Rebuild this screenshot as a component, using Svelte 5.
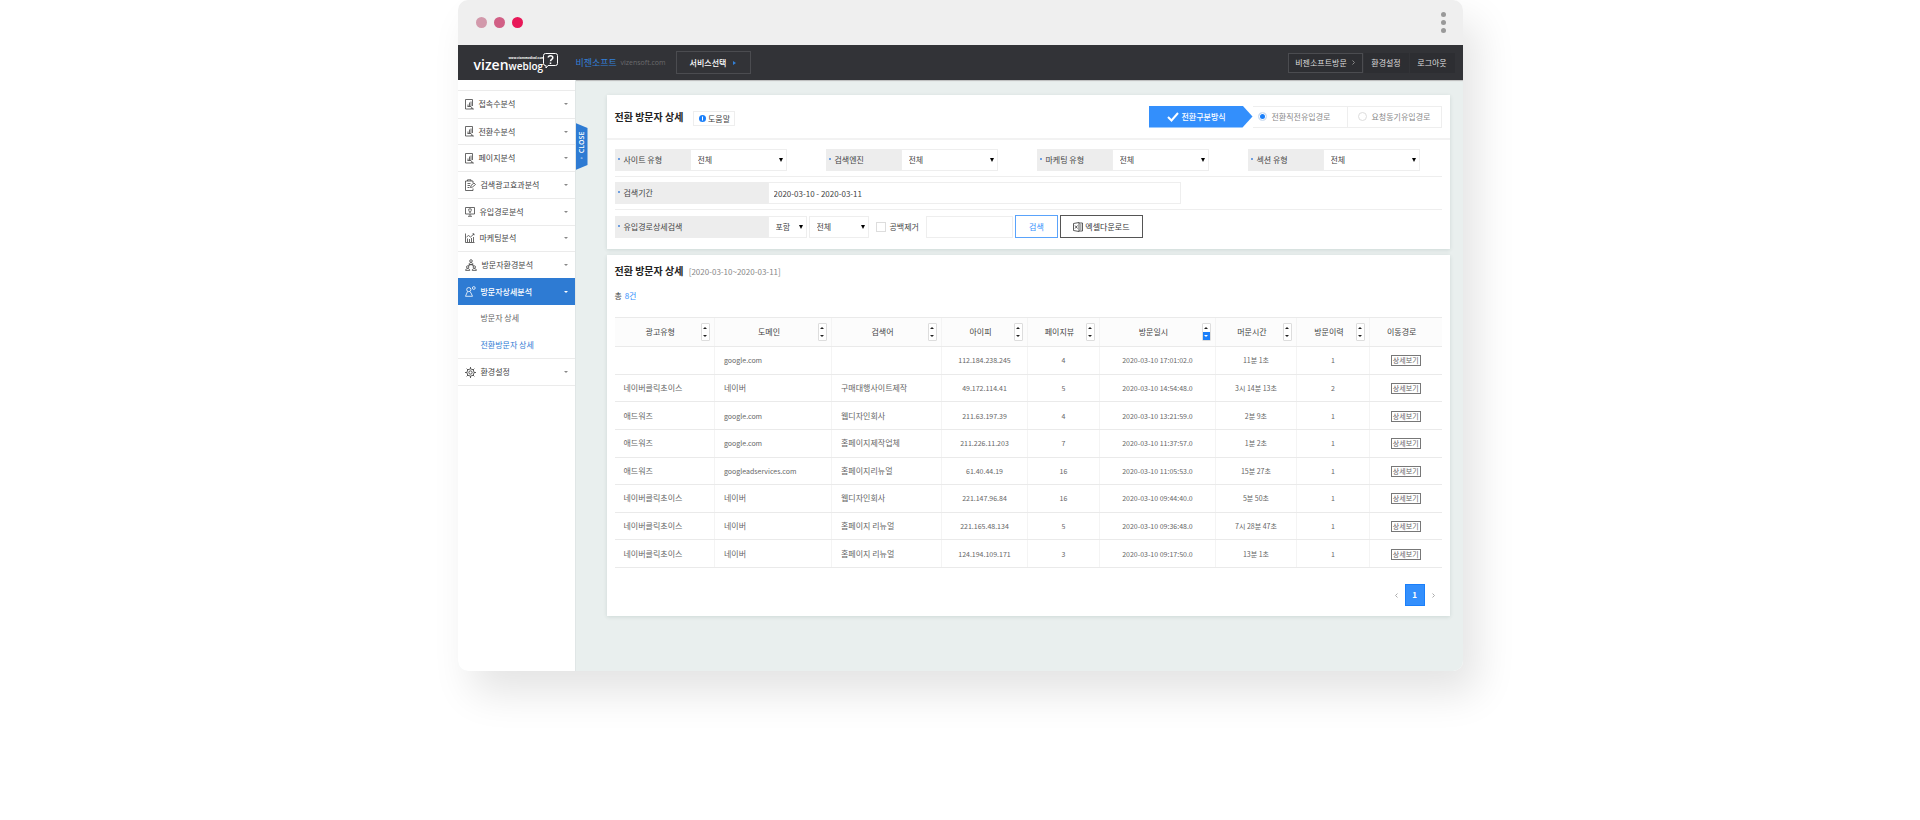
<script lang="ts">
  type Row = {
    ad: string;
    domain: string;
    keyword: string;
    ip: string;
    views: number;
    date: string;
    stay: string;
    visits: number;
  };

  const menu = [
    { icon: 'doc', label: '접속수분석' },
    { icon: 'doc', label: '전환수분석' },
    { icon: 'doc', label: '페이지분석' },
    { icon: 'clip', label: '검색광고효과분석' },
    { icon: 'screen', label: '유입경로분석' },
    { icon: 'chart', label: '마케팅분석' },
    { icon: 'org', label: '방문자환경분석' },
    { icon: 'user', label: '방문자상세분석', sub: ['방문자 상세', '전환방문자 상세'] },
    { icon: 'gear', label: '환경설정' }
  ];

  const filters = ['사이트 유형', '검색엔진', '마케팅 유형', '섹션 유형'];

  const columns = [
    { label: '광고유형', width: 100 },
    { label: '도메인', width: 117 },
    { label: '검색어', width: 110 },
    { label: '아이피', width: 86 },
    { label: '페이지뷰', width: 72 },
    { label: '방문일시', width: 116 },
    { label: '머문시간', width: 81 },
    { label: '방문이력', width: 73 },
    { label: '이동경로', width: 72 }
  ];
  const total = columns.reduce((sum, c) => sum + c.width, 0);

  const rows: Row[] = [
    { ad: '', domain: 'google.com', keyword: '', ip: '112.184.238.245', views: 4, date: '2020-03-10 17:01:02.0', stay: '11분 1초', visits: 1 },
    { ad: '네이버클릭초이스', domain: '네이버', keyword: '구매대행사이트제작', ip: '49.172.114.41', views: 5, date: '2020-03-10 14:54:48.0', stay: '3시 14분 13초', visits: 2 },
    { ad: '애드워즈', domain: 'google.com', keyword: '웹디자인회사', ip: '211.63.197.39', views: 4, date: '2020-03-10 13:21:59.0', stay: '2분 9초', visits: 1 },
    { ad: '애드워즈', domain: 'google.com', keyword: '홈페이지제작업체', ip: '211.226.11.203', views: 7, date: '2020-03-10 11:37:57.0', stay: '1분 2초', visits: 1 },
    { ad: '애드워즈', domain: 'googleadservices.com', keyword: '홈페이지리뉴얼', ip: '61.40.44.19', views: 16, date: '2020-03-10 11:05:53.0', stay: '15분 27초', visits: 1 },
    { ad: '네이버클릭초이스', domain: '네이버', keyword: '웹디자인회사', ip: '221.147.96.84', views: 16, date: '2020-03-10 09:44:40.0', stay: '5분 50초', visits: 1 },
    { ad: '네이버클릭초이스', domain: '네이버', keyword: '홈페이지 리뉴얼', ip: '221.165.48.134', views: 5, date: '2020-03-10 09:36:48.0', stay: '7시 28분 47초', visits: 1 },
    { ad: '네이버클릭초이스', domain: '네이버', keyword: '홈페이지 리뉴얼', ip: '124.194.109.171', views: 3, date: '2020-03-10 09:17:50.0', stay: '13분 1초', visits: 1 }
  ];

  let path = 'direct';
</script>

{#snippet menuIcon(name: string)}
  {#if name === 'doc'}
    <svg width="9" height="11" viewBox="0 0 9 11"><path d="M7.500 7V.5h-7v9.500H6M2.500 7.500h3.500M3 7.500V5.500M4.500 7.500v-4M6 7.500V2.500M6.500 8.500l2 1.500H6.200z" /></svg>
  {:else if name === 'clip'}
    <svg width="11" height="12" viewBox="0 0 11 12"><path d="M8 4V2H.5v9.500H8V9.500M2.500 2V.8h3.500V2M2.500 4.500h3M2.500 6.500h2.500M2.500 8.500h2M5.500 8.500l.5-2 3-2.500 1.500 1.500-3 2.500z" /></svg>
  {:else if name === 'screen'}
    <svg width="10" height="10" viewBox="0 0 10 10"><path d="M.5.5h9v6.500h-9zM3 9.300h4M5 7v2M5 5.800L3.800 3.500a1.300 1.300 0 1 1 2.400 0z" /></svg>
  {:else if name === 'chart'}
    <svg width="10" height="10" viewBox="0 0 10 10"><path d="M.5.5v9h9M2.500 9V5.500M4.500 9V6M6.500 9V5M8.500 9V4M1.500 4l2-1.500L5.500 4l3.500-3M7.500.8H9v1.500" /></svg>
  {:else if name === 'org'}
    <svg width="12" height="12" viewBox="0 0 12 12"><circle cx="6" cy="2" r="1.300" /><path d="M4 5.500c0-2.500 4-2.500 4 0zM6 5.500L3 7M6 5.500L9 7" /><circle cx="2.700" cy="8" r="1.200" /><circle cx="9.300" cy="8" r="1.200" /><path d="M.6 11.400c0-2.500 4.200-2.500 4.200 0zM7.200 11.400c0-2.500 4.200-2.500 4.200 0z" /></svg>
  {:else if name === 'user'}
    <svg width="11" height="11" viewBox="0 0 11 11"><circle cx="3.800" cy="3.600" r="2.100" /><path d="M2.500 5.500L.5 10.300h7L6 7M5 5.700l1 1.300" /><circle cx="8.800" cy="2" r="1.400" /></svg>
  {:else}
    <svg width="11" height="11" viewBox="0 0 10 10"><circle cx="5" cy="5" r="1.500" /><circle cx="5" cy="5" r="3.300" /><path d="M5 0v1.700M5 8.300V10M0 5h1.700M8.300 5H10M1.500 1.500l1.200 1.200M7.300 7.300l1.200 1.200M8.500 1.500L7.300 2.700M2.700 7.300L1.500 8.500" /></svg>
  {/if}
{/snippet}

<div class="page">
  <div class="browser">
    <div class="titlebar">
      <div class="dots"><i></i><i></i><i></i></div>
      <div class="kebab"><i></i><i></i><i></i></div>
    </div>

    <header class="topbar">
      <a class="logo" href="#home">
        <span class="vizen">vizen</span>
        <span class="weblog"><small>www.vizenmedical.com</small>weblog</span>
        <svg width="15" height="16" viewBox="0 0 15 16">
          <path d="M2.500.5h10a2 2 0 0 1 2 2v8a2 2 0 0 1-2 2H5l-2 2.500v-2.500h-.5a2 2 0 0 1-2-2v-8a2 2 0 0 1 2-2z" />
          <path class="mark" d="M5.200 4.500c.2-2.500 4.600-2.500 4.600.2 0 1.700-2.300 1.700-2.300 3.500M7.500 9.600v1.300" />
        </svg>
      </a>
      <span class="company">비젠소프트</span>
      <span class="site">vizensoft.com</span>
      <button class="service">서비스선택<svg width="3" height="4" viewBox="0 0 3 4"><path d="M0 0l3 2-3 2z" /></svg></button>
      <nav class="account">
        <a class="visit" href="#visit">비젠소프트방문<svg width="3" height="5" viewBox="0 0 3 5"><path d="M.5.5l2 2-2 2" /></svg></a>
        <a href="#settings">환경설정</a>
        <a href="#logout">로그아웃</a>
      </nav>
    </header>

    <div class="body">
      <aside class="sidebar">
        <nav class="menu">
          {#each menu as item}
            <a class="item" class:active={item.sub} href="#menu">
              {@render menuIcon(item.icon)}
              <span>{item.label}</span>
              <svg class="chev" width="4" height="2" viewBox="0 0 4 2"><path d="M0 0h4L2 2z" /></svg>
            </a>
            {#if item.sub}
              {#each item.sub as sub, i}
                <a class="sub" class:current={i === 1} href="#sub">{sub}</a>
              {/each}
            {/if}
          {/each}
        </nav>
        <button class="close"><span>◦ CLOSE</span></button>
      </aside>

      <main>
        <section class="panel search">
          <div class="panel-head">
            <h1>전환 방문자 상세</h1>
            <button class="help"><svg width="7" height="7" viewBox="0 0 7 7"><circle cx="3.500" cy="3.500" r="3.500" /><path d="M3.500 1.500v4" /></svg>도움말</button>
            <div class="steps">
              <div class="step-title">
                <svg width="12" height="10" viewBox="0 0 12 10"><path d="M1 5l3.500 3.500L11 1" /></svg>
                전환구분방식
              </div>
              <label><input type="radio" name="path" value="direct" bind:group={path} />전환직전유입경로</label>
              <label><input type="radio" name="path" value="motive" bind:group={path} />요청동기유입경로</label>
            </div>
          </div>

          <form class="filters">
            <div class="line types">
              {#each filters as name, i}
                <div class="field">
                  <label class="name" for="type{i}">{name}</label>
                  <select id="type{i}"><option>전체</option></select>
                </div>
              {/each}
            </div>
            <div class="line">
              <label class="name wide" for="period">검색기간</label>
              <input id="period" class="period" type="text" value="2020-03-10 - 2020-03-11" />
            </div>
            <div class="line">
              <label class="name wide" for="word">유입경로상세검색</label>
              <select class="include" aria-label="포함"><option>포함</option></select>
              <select class="scope" aria-label="전체"><option>전체</option></select>
              <label class="trim"><input type="checkbox" />공백제거</label>
              <input id="word" class="word" type="text" />
              <button type="button" class="find">검색</button>
              <button type="button" class="excel">
                <svg width="10" height="10" viewBox="0 0 10 10"><path d="M6 1H9.500v8H6M6 .5v9L.5 8.500v-7zM2 3.500l2.500 3M4.500 3.500L2 6.500M7 3h1.500M7 5h1.500M7 7h1.500" /></svg>
                엑셀다운로드
              </button>
            </div>
          </form>
        </section>

        <section class="panel result">
          <h2>전환 방문자 상세 <span>[2020-03-10~2020-03-11]</span></h2>
          <p class="count">총 <b>8건</b></p>
          <table>
            <colgroup>
              {#each columns as col}
                <col style="width: {(col.width / total) * 100}%" />
              {/each}
            </colgroup>
            <thead>
              <tr>
                {#each columns as col, i}
                  <th>
                    <div class="head">
                      <span>{col.label}</span>
                      <div class="sort" class:none={i === 8}>
                        {#if i < 8}
                          <button aria-label="오름차순"><svg width="4" height="2" viewBox="0 0 4 2"><path d="M0 2l2-2 2 2z" /></svg></button>
                          <button class:on={i === 5} aria-label="내림차순"><svg width="4" height="2" viewBox="0 0 4 2"><path d="M0 0l2 2 2-2z" /></svg></button>
                        {/if}
                      </div>
                    </div>
                  </th>
                {/each}
              </tr>
            </thead>
            <tbody>
              {#each rows as row}
                <tr>
                  <td class="text">{row.ad}</td>
                  <td class="text" class:latin={row.domain.startsWith('google')}>{row.domain}</td>
                  <td class="text">{row.keyword}</td>
                  <td>{row.ip}</td>
                  <td>{row.views}</td>
                  <td>{row.date}</td>
                  <td>{row.stay}</td>
                  <td>{row.visits}</td>
                  <td><button class="detail">상세보기</button></td>
                </tr>
              {/each}
            </tbody>
          </table>
          <nav class="pages">
            <a href="#prev" aria-label="이전"><svg width="3" height="5" viewBox="0 0 3 5"><path d="M2.500.5l-2 2 2 2" /></svg></a>
            <a class="now" href="#1">1</a>
            <a href="#next" aria-label="다음"><svg width="3" height="5" viewBox="0 0 3 5"><path d="M.5.5l2 2-2 2" /></svg></a>
          </nav>
        </section>
      </main>
    </div>
  </div>
</div>

<style>
  :global(body) {
    background: #fff;
  }

  .page, .page * {
    box-sizing: border-box;
  }

  .page {
    min-height: 100vh;
    padding-bottom: 80px;
    overflow: hidden;
  }

  .browser {
    max-width: 1005px;
    margin: 0 auto;
    border-radius: 10px;
    box-shadow: 14px 22px 40px rgba(0, 0, 0, 0.11);
    color: #444;
    font-family: "Noto Sans CJK KR", sans-serif;
    font-size: 8px;
    line-height: 12px;
  }

  a {
    color: inherit;
    text-decoration: none;
  }

  button, input, select {
    margin: 0;
    padding: 0;
    border: 0;
    border-radius: 0;
    background: none;
    color: inherit;
    font: inherit;
  }

  svg {
    flex: none;
    fill: none;
    stroke: currentColor;
  }

  h1, h2, p {
    margin: 0;
  }

  /* browser chrome */
  .titlebar {
    display: flex;
    align-items: center;
    justify-content: space-between;
    height: 45px;
    padding: 0 17px 1px 18px;
    border-radius: 10px 10px 0 0;
    background: #efefef;
  }

  .dots {
    display: flex;
    gap: 7px;
  }

  .dots i {
    width: 11px;
    height: 11px;
    border-radius: 50%;
    background: #d299ab;
  }

  .dots i:nth-child(2) {
    background: #d15f85;
  }

  .dots i:nth-child(3) {
    background: #e81858;
  }

  .kebab {
    display: grid;
    gap: 3px;
  }

  .kebab i {
    width: 5px;
    height: 5px;
    border-radius: 50%;
    background: #999;
  }

  .topbar {
    display: flex;
    align-items: center;
    height: 35px;
    padding: 0 8px 0 16px;
    background: #323337;
  }

  .logo {
    display: flex;
    align-items: center;
    width: 102px;
    color: #fff;
    font-family: "Open Sans", sans-serif;
  }

  .vizen {
    padding-top: 4px;
    font-size: 14px;
    font-weight: 600;
    line-height: 18px;
  }

  .weblog {
    display: grid;
    padding-top: 2px;
    font-size: 10px;
    font-weight: 600;
    line-height: 12px;
  }

  .weblog small {
    width: 0;
    font-size: 3px;
    font-weight: 700;
    line-height: 4px;
  }

  .logo svg {
    margin-bottom: 4px;
  }

  .mark {
    stroke-width: 1.500;
  }

  .company {
    width: 45px;
    color: #3280d8;
    font-size: 9px;
  }

  .site {
    width: 55px;
    color: #6b6b6d;
    font-family: "Open Sans", sans-serif;
    font-size: 7px;
  }

  .service {
    display: flex;
    align-items: center;
    justify-content: center;
    gap: 7px;
    width: 75px;
    height: 23px;
    border: 1px solid #4b4c50;
    color: #fff;
    font-weight: 500;
  }

  .service svg {
    fill: #3280d8;
    stroke: none;
  }

  .account {
    display: flex;
    gap: 1px;
    margin-left: auto;
    color: #ddd;
  }

  .account a {
    display: flex;
    align-items: center;
    justify-content: center;
    width: 45px;
    height: 20px;
    background: #2d2e32;
  }

  .account .visit {
    gap: 5px;
    width: 75px;
    border: 1px solid #4b4c50;
  }

  .visit svg {
    stroke: #888;
  }

  /* sidebar */
  .body {
    display: flex;
    min-height: 590px;
    border-radius: 0 0 10px 10px;
    background: #e9efee;
    box-shadow: inset 0 2px 1px -1px #bbb;
  }

  .sidebar {
    position: relative;
    flex: none;
    width: 118px;
    padding-top: 10px;
    border-right: 1px solid #e0e6e6;
    border-bottom-left-radius: 10px;
    background: #fff;
  }

  .menu {
    display: grid;
    grid-template-rows: repeat(11, 1fr);
    height: 296px;
    border: solid #ebebeb;
    border-width: 1px 0;
  }

  .item {
    display: flex;
    align-items: center;
    gap: 5px;
    padding: 0 7px;
    border-top: 1px solid #ebebeb;
  }

  .item:first-child {
    border-top: 0;
  }

  .item svg {
    stroke-width: 0.800;
  }

  .item .chev {
    margin-left: auto;
    fill: #888;
    stroke: none;
  }

  .active {
    border-color: #2e7bd3;
    background: #2e7bd3;
    color: #fff;
    font-weight: 500;
  }

  .active .chev {
    fill: #fff;
  }

  .sub {
    display: flex;
    align-items: center;
    padding-left: 23px;
    color: #666;
  }

  .current {
    color: #2e7bd3;
  }

  .close {
    position: absolute;
    top: 43px;
    left: 118px;
    width: 12px;
    height: 47px;
    background: #2e7bd3;
    clip-path: polygon(0 0, 100% 5px, 100% 42px, 0 100%);
    color: #fff;
    font-family: "Open Sans", sans-serif;
    font-size: 7px;
    font-weight: 600;
    line-height: 12px;
    writing-mode: vertical-rl;
  }

  .close span {
    display: block;
    transform: rotate(180deg);
  }

  /* panels */
  main {
    flex: 1;
    min-width: 0;
    padding: 15px 13px 55px 31px;
  }

  .panel {
    background: #fff;
    box-shadow: 0 1px 4px rgba(0, 60, 50, 0.12);
  }

  .panel-head {
    display: flex;
    align-items: center;
    height: 45px;
    padding: 0 8px;
    border-bottom: 2px solid #f2f2f2;
  }

  h1, h2 {
    color: #222;
    font-size: 10px;
    font-weight: 700;
    line-height: 16px;
  }

  .help {
    display: flex;
    align-items: center;
    justify-content: center;
    gap: 2px;
    width: 42px;
    height: 15px;
    margin: 4px 0 0 10px;
    border: 1px solid #eee;
  }

  .help circle {
    fill: #1a7ffa;
    stroke: none;
  }

  .help path {
    stroke: #fff;
  }

  .steps {
    display: flex;
    margin-left: auto;
    color: #888;
  }

  .steps label {
    display: flex;
    align-items: center;
    gap: 5px;
    width: 95px;
    height: 22px;
    padding-left: 10px;
    border: 1px solid #eee;
  }

  .steps label:nth-child(2) {
    width: 94px;
    padding-left: 5px;
    border-width: 1px 0;
  }

  .step-title {
    display: flex;
    align-items: center;
    gap: 3px;
    width: 104px;
    height: 22px;
    padding-left: 18px;
    background: #338ffc;
    clip-path: polygon(0 0, 94px 0, 100% 50%, 94px 100%, 0 100%);
    color: #fff;
    font-weight: 500;
  }

  .step-title svg {
    stroke-width: 2;
  }

  input[type='radio'] {
    width: 9px;
    height: 9px;
    border: 1px solid #ddd;
    border-radius: 50%;
    appearance: none;
  }

  input[type='radio']:checked {
    border-color: #eee;
    background: #1a7ffa;
    box-shadow: inset 0 0 0 1px #fff;
  }

  .filters {
    padding: 9px 8px 11px;
  }

  .line {
    display: flex;
    align-items: center;
    height: 33px;
    padding-bottom: 5px;
    border-bottom: 1px solid #eee;
  }

  .line:first-child {
    height: 28px;
  }

  .line:not(:first-child) {
    padding-top: 5px;
  }

  .line:last-child {
    height: 28px;
    padding-bottom: 0;
    border: 0;
  }

  .types {
    gap: 39px;
  }

  .field {
    display: flex;
    width: 172px;
  }

  .name {
    flex: none;
    width: 75px;
    height: 22px;
    background: #ededed;
    line-height: 22px;
  }

  .name::before {
    content: "";
    display: inline-block;
    width: 2px;
    height: 2px;
    margin: 0 4px 3px 3px;
    background: #6f9fe0;
  }

  .wide {
    width: 153px;
  }

  select, input[type='text'] {
    height: 22px;
    border: 1px solid #eee;
    background: #fff;
  }

  select {
    width: 97px;
    padding: 0 7px;
    appearance: none;
    background: #fff url("data:image/svg+xml,%3Csvg xmlns='http://www.w3.org/2000/svg' width='4' height='4'%3E%3Cpath d='M0 0h4L2 4z'/%3E%3C/svg%3E") no-repeat right 3px center;
  }

  .include {
    width: 39px;
  }

  .scope {
    width: 60px;
    margin-left: 2px;
  }

  .period {
    width: 50%;
    padding: 0 5px;
  }

  .trim {
    display: flex;
    align-items: center;
    gap: 4px;
    margin: 0 7px;
  }

  input[type='checkbox'] {
    width: 10px;
    height: 10px;
    border: 1px solid #ddd;
    appearance: none;
  }

  .word {
    width: 87px;
  }

  .find, .excel {
    height: 23px;
    margin-left: 2px;
    border: 1px solid #5aa3fb;
    color: #338ffc;
  }

  .find {
    width: 43px;
  }

  .excel {
    display: flex;
    align-items: center;
    justify-content: center;
    gap: 2px;
    width: 83px;
    border-color: #555;
    color: #333;
  }

  .excel svg {
    stroke-width: 0.800;
  }

  .result {
    margin-top: 6px;
    padding: 8px 8px 10px;
  }

  h2 span {
    margin-left: 3px;
    color: #888;
    font-size: 8px;
    font-weight: 400;
  }

  .count {
    padding: 10px 0 15px;
  }

  .count b {
    margin-left: 1px;
    color: #338ffc;
    font-weight: 400;
  }

  table {
    width: 100%;
    height: 251px;
    border-collapse: collapse;
    table-layout: fixed;
  }

  th, td {
    padding: 0;
    border-bottom: 1px solid #eaeaea;
    border-left: 1px solid #f4f4f4;
    font-weight: 400;
    text-align: center;
  }

  th:first-child, td:first-child {
    border-left: 0;
  }

  th {
    height: 29px;
    border-top: 1px solid #eaeaea;
    background: #fcfcfc;
  }

  td {
    height: 27px;
    color: #666;
    font-size: 7px;
  }

  .head {
    display: flex;
    align-items: center;
    padding: 0 4px 0 5px;
  }

  .head span {
    flex: 1;
  }

  .sort {
    width: 9px;
    border: 1px solid #ddd;
    border-radius: 1px;
    background: #fff;
  }

  .none {
    border: 0;
  }

  .sort button {
    display: grid;
    place-items: center;
    width: 100%;
    height: 8px;
  }

  .sort svg {
    fill: #222;
    stroke: none;
  }

  .sort .on {
    background: #1a7ffa;
  }

  .sort .on svg {
    fill: #fff;
  }

  .text {
    padding-left: 9px;
    font-size: 8px;
    text-align: left;
  }

  .latin {
    font-size: 7px;
  }

  .detail {
    width: 30px;
    height: 11px;
    border: 1px solid #777;
    line-height: 9px;
  }

  .pages {
    display: flex;
    align-items: center;
    justify-content: flex-end;
    gap: 7px;
    margin-top: 16px;
    padding-right: 7px;
    color: #aaa;
    line-height: 0;
  }

  .now {
    width: 20px;
    height: 22px;
    border: 1px solid #1a7ffa;
    background: #338ffc;
    color: #fff;
    font-weight: 700;
    line-height: 20px;
    text-align: center;
  }
</style>
